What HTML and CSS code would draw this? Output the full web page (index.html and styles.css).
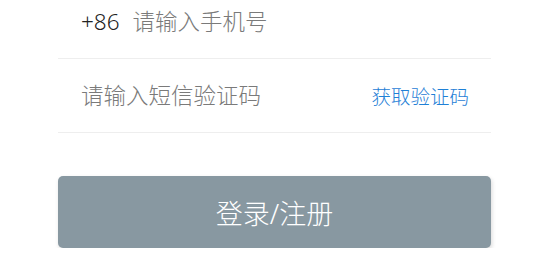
FILE: index.html
```html
<!DOCTYPE html>
<html lang="zh-CN">
<head>
    <meta charset="UTF-8">
    <meta name="viewport" content="width=device-width, initial-scale=1.0">
    <title>登录</title>
    <link rel="stylesheet" href="styles.css">
</head>
<body>
    <section class="login-form">
        <div class="form-row">
            <span class="area-code">+86</span>
            <input type="tel" class="form-input" placeholder="请输入手机号">
        </div>
        <div class="form-row">
            <input type="text" class="form-input code-input" placeholder="请输入短信验证码">
            <a href="#" class="code-link">获取验证码</a>
        </div>
        <button class="login-button">登录/注册</button>
    </section>
</body>
</html>
```

FILE: styles.css
```css
body {
    margin: 0;
    padding: 0;
    background-color: #ffffff;
    font-family: 'Noto Sans', 'Noto Sans CJK SC', sans-serif;
    font-weight: 300;
}
.login-form {
    margin: -15px 57px 0 58px;
}
.form-row {
    height: 73px;
    display: flex;
    align-items: center;
    padding: 0 22px 0 23px;
    border-bottom: 1px solid #eeeeee;
}
.area-code {
    font-size: 22.5px;
    color: #222222;
    margin-right: 13px;
}
.form-input {
    flex: 1;
    min-width: 0;
    border: none;
    outline: none;
    padding: 0;
    font-family: inherit;
    font-weight: 300;
    font-size: 22.5px;
    color: #333333;
    background: transparent;
}
.form-input::placeholder {
    color: #7a7a7a;
}
.code-link {
    font-size: 19.5px;
    color: #1f80d6;
    text-decoration: none;
}
.login-button {
    display: block;
    width: 100%;
    height: 72px;
    margin-top: 43px;
    border: none;
    border-radius: 5px;
    background-color: #8898a1;
    color: #ffffff;
    font-family: inherit;
    font-weight: 300;
    font-size: 27px;
    box-shadow: 1px 2px 4px rgba(0, 0, 0, 0.15);
    cursor: pointer;
}
```
